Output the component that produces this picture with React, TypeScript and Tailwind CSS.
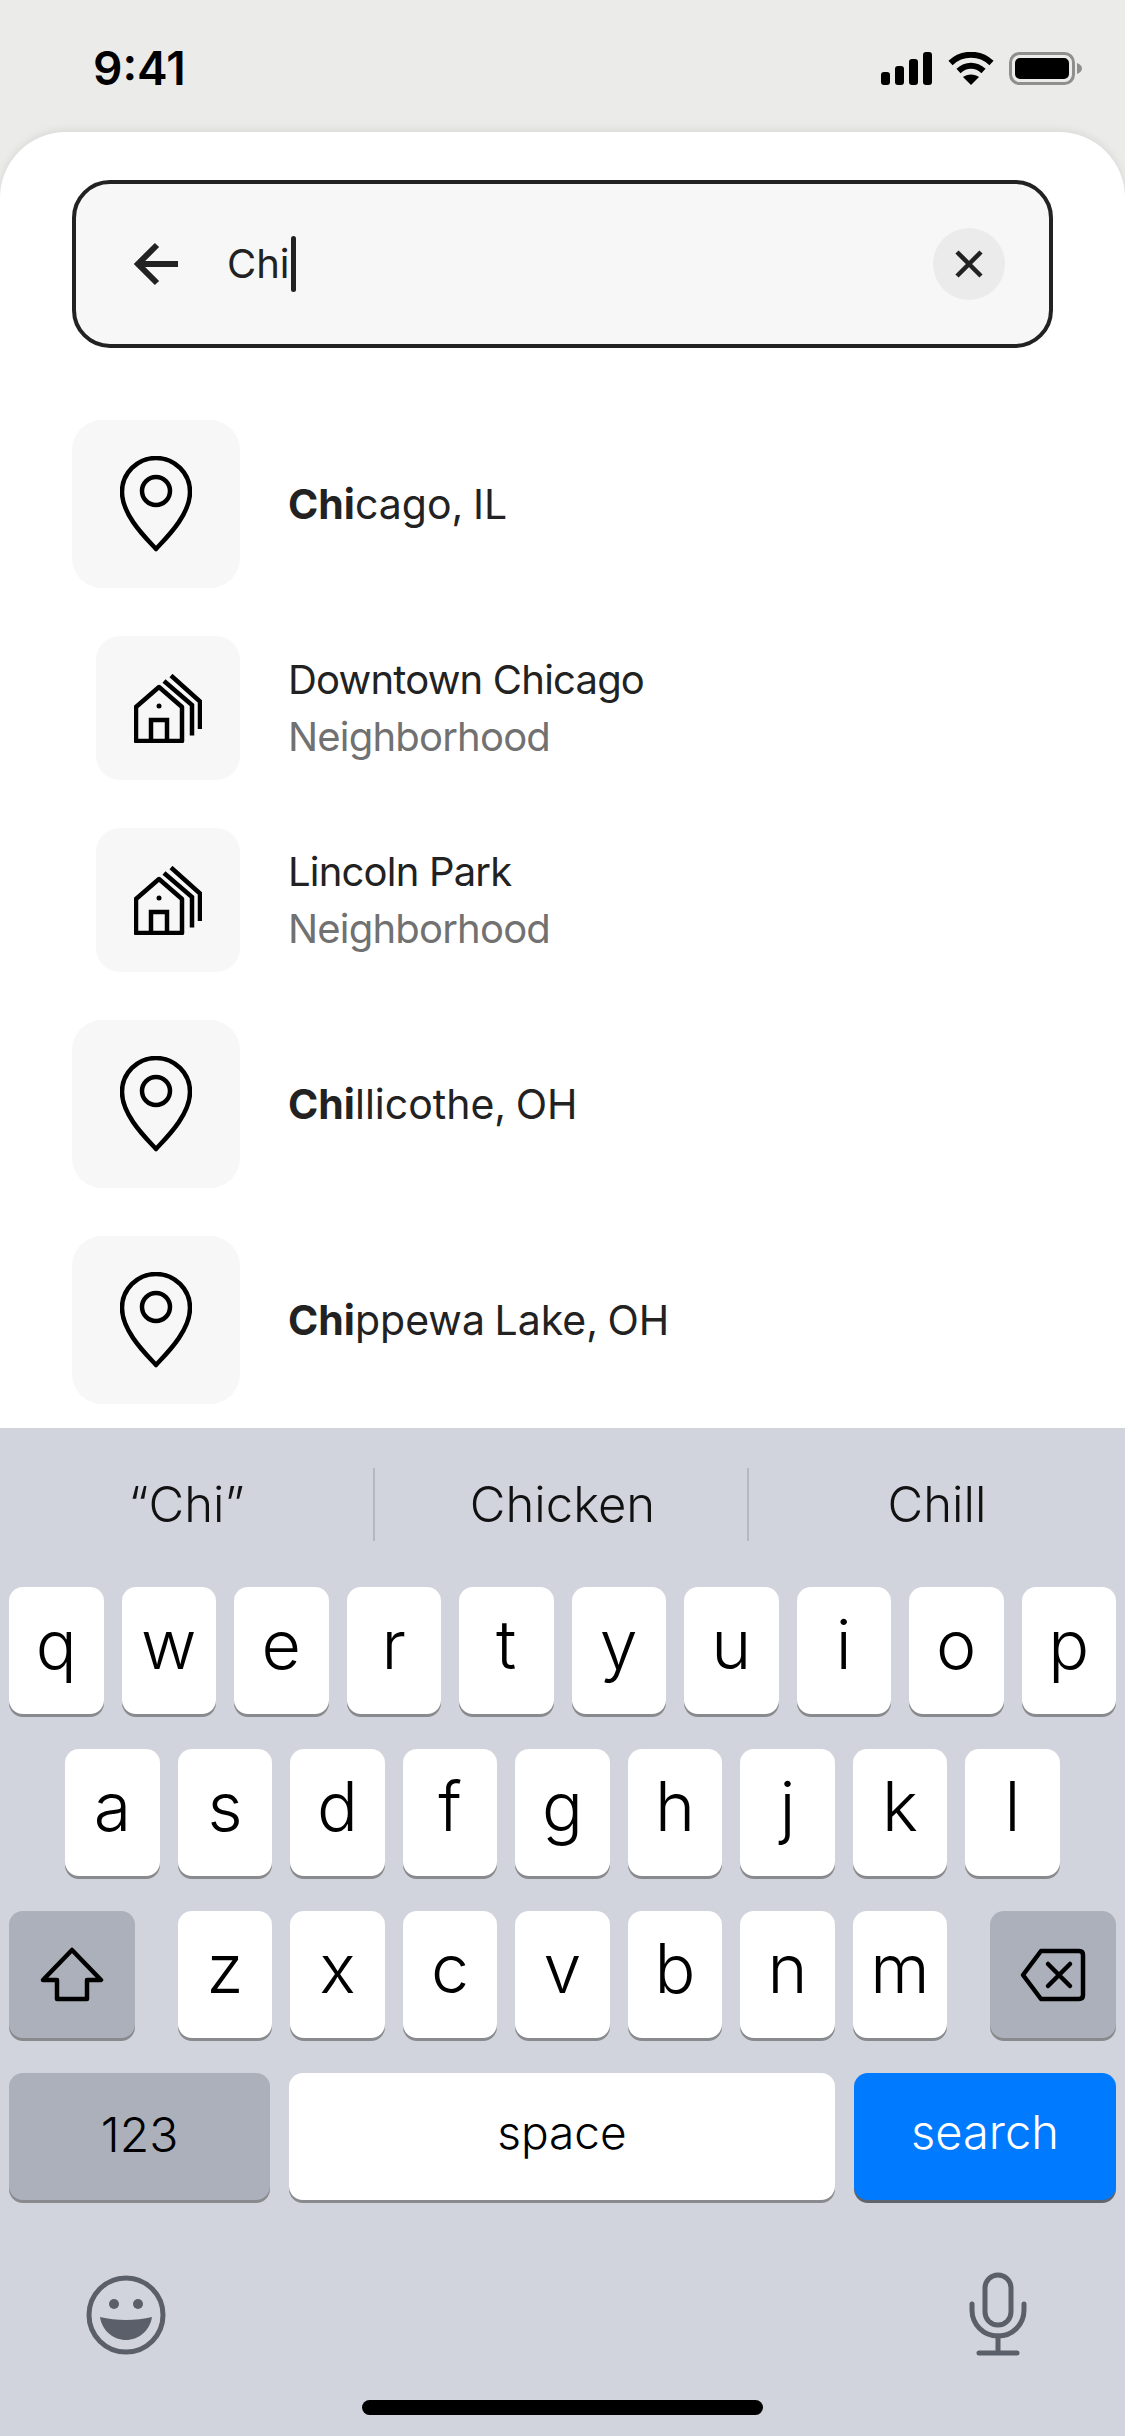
const sans = "font-['Inter','Liberation_Sans',sans-serif]";

function PinIcon() {
  return (
    <svg width="72" height="96" viewBox="0 0 72 96" fill="none" stroke="#000" strokeWidth="4.5">
      <path d="M36 93C28 84 2 60 2 36A34 34 0 0 1 70 36C70 60 44 84 36 93Z" strokeLinejoin="round" />
      <circle cx="36" cy="35" r="14" />
    </svg>
  );
}

function HouseIcon() {
  return (
    <svg width="68" height="69" viewBox="0 0 68 69" fill="none" stroke="#000" strokeWidth="4.5">
      <path d="M2 33L25 13L48 33V67H2Z" strokeLinejoin="round" />
      <path d="M17 67V46H33V67" />
      <circle cx="25" cy="32" r="2.5" fill="#000" stroke="none" />
      <path d="M30 7L58 31V61.5" />
      <path d="M37 1.5L66 27.5V55" />
    </svg>
  );
}

function Result({ kind, title, bold, sub }: { kind: "pin" | "house"; title: string; bold?: string; sub?: string }) {
  return (
    <div className="flex items-center gap-12">
      <div className="flex w-[168px] shrink-0 justify-end">
        <div
          className={
            kind === "pin"
              ? "flex h-[168px] w-[168px] items-center justify-center rounded-[30px] bg-[#f7f7f7]"
              : "flex h-[144px] w-[144px] items-center justify-center rounded-[24px] bg-[#f7f7f7]"
          }
        >
          {kind === "pin" ? <PinIcon /> : <HouseIcon />}
        </div>
      </div>
      <div
        className={
          kind === "pin"
            ? "text-[41px] leading-[57px] [word-spacing:-2px] text-[#222222]"
            : "text-[40px] leading-[57px] tracking-[-0.8px] text-[#222222]"
        }
      >
        <div>
          {bold && <span className="font-bold">{bold}</span>}
          {title}
        </div>
        {sub && <div className="text-[#717171]">{sub}</div>}
      </div>
    </div>
  );
}

function Key({ label }: { label: string }) {
  return (
    <div className="flex h-[127px] w-[94.5px] items-center justify-center rounded-[14px] bg-white pb-[13px] text-[68px] font-[350] text-black shadow-[0_3px_0_#898a8d]">
      {label}
    </div>
  );
}

function StatusIcons() {
  return (
    <div className="flex items-center gap-[15px]">
      <svg className="mr-[1px]" width="51" height="33" viewBox="0 0 51 33" fill="#000">
        <rect x="0" y="20" width="9" height="13" rx="3" />
        <rect x="14" y="14" width="9" height="19" rx="3" />
        <rect x="28" y="7" width="9" height="26" rx="3" />
        <rect x="42" y="0" width="9" height="33" rx="3" />
      </svg>
      <svg width="46" height="33" viewBox="0 0 46 33" fill="none" stroke="#000" strokeWidth="6">
        <path d="M2.5 11C14 0 32 0 43.5 11" />
        <path d="M10.5 19C18 12 28 12 35.5 19" />
        <path d="M23 33L15 25C19 21.5 27 21.5 31 25Z" fill="#000" stroke="none" />
      </svg>
      <svg width="73" height="33" viewBox="0 0 73 33">
        <rect x="1.5" y="1.5" width="63" height="30" rx="9" fill="none" stroke="#8f8f8f" strokeWidth="3" />
        <rect x="6" y="6" width="54" height="21" rx="5" fill="#000" />
        <path d="M68 11C71 12 73 14 73 16.5C73 19 71 21 68 22Z" fill="#8f8f8f" />
      </svg>
    </div>
  );
}

export default function App() {
  const row1 = ["q", "w", "e", "r", "t", "y", "u", "i", "o", "p"];
  const row2 = ["a", "s", "d", "f", "g", "h", "j", "k", "l"];
  const row3 = ["z", "x", "c", "v", "b", "n", "m"];

  return (
    <div className={`flex h-[2436px] w-[1125px] flex-col overflow-hidden bg-[#ebebe9] ${sans}`}>
      {/* Status bar */}
      <div className="flex h-[132px] shrink-0 items-start justify-between pl-[93px] pr-[43px] pt-[44px]">
        <span className="text-[46px] leading-[48px] font-semibold text-black">9:41</span>
        <div className="pt-[8px]">
          <StatusIcons />
        </div>
      </div>

      {/* Sheet */}
      <div className="h-[1296px] shrink-0 rounded-t-[66px] bg-white px-[72px] pt-12 shadow-[0_-2px_8px_rgba(0,0,0,0.08)]">
        <div className="flex h-[168px] items-center rounded-[38px] border-[4px] border-[#222222] bg-[#f7f7f7] pl-[57px] pr-[44px]">
          <svg width="46" height="44" viewBox="0 0 46 44" fill="none" stroke="#222222" strokeWidth="6">
            <path d="M5 22H45" />
            <path d="M24 3L5 22L24 41" />
          </svg>
          <div className="ml-[48px] flex flex-1 items-center text-[40px] text-[#222222]">
            Chi
            <span className="ml-[1px] h-[56px] w-[5px] rounded-full bg-[#222222]" />
          </div>
          <div className="flex h-[72px] w-[72px] items-center justify-center rounded-full bg-[#ebebeb]">
            <svg width="28" height="28" viewBox="0 0 28 28" fill="none" stroke="#222222" strokeWidth="4.5">
              <path d="M2 2L26 26M26 2L2 26" />
            </svg>
          </div>
        </div>

        <div className="mt-[72px] flex flex-col gap-12">
          <Result kind="pin" bold="Chi" title="cago, IL" />
          <Result kind="house" title="Downtown Chicago" sub="Neighborhood" />
          <Result kind="house" title="Lincoln Park" sub="Neighborhood" />
          <Result kind="pin" bold="Chi" title="llicothe, OH" />
          <Result kind="pin" bold="Chi" title="ppewa Lake, OH" />
        </div>
      </div>

      {/* Keyboard */}
      <div className="flex flex-1 flex-col bg-[#d1d4dc]">
        <div className="mt-[40px] flex h-[73px] items-center text-[49px] font-[350] text-[#111111]">
          <div className="flex h-full w-[375px] items-center justify-center border-r-2 border-[#b4b8c0]">“Chi”</div>
          <div className="flex h-full w-[374px] items-center justify-center border-r-2 border-[#b4b8c0] pl-[3px]">Chicken</div>
          <div className="flex h-full flex-1 items-center justify-center">Chill</div>
        </div>

        <div className="mt-[46px] flex flex-col gap-[35px] px-[9px]">
          <div className="flex justify-between">
            {row1.map((k) => (
              <Key key={k} label={k} />
            ))}
          </div>
          <div className="flex justify-center gap-[18px]">
            {row2.map((k) => (
              <Key key={k} label={k} />
            ))}
          </div>
          <div className="flex items-center justify-between">
            <div className="flex h-[127px] w-[126px] items-center justify-center rounded-[14px] bg-[#abb0ba] shadow-[0_3px_0_#898a8d]">
              <svg width="64" height="55" viewBox="0 0 64 55" fill="none" stroke="#000" strokeWidth="4.5" strokeLinejoin="round">
                <path d="M32 3L61 33H47V52H17V33H3Z" />
              </svg>
            </div>
            <div className="flex gap-[18px]">
              {row3.map((k) => (
                <Key key={k} label={k} />
              ))}
            </div>
            <div className="flex h-[127px] w-[126px] items-center justify-center rounded-[14px] bg-[#abb0ba] shadow-[0_3px_0_#898a8d]">
              <svg width="66" height="54" viewBox="0 0 66 54" fill="none" stroke="#000" strokeWidth="4.5" strokeLinejoin="round" strokeLinecap="round">
                <path d="M21 3H59Q63 3 63 7V47Q63 51 59 51H21L3 27Z" />
                <path d="M28 16L50 38M50 16L28 38" />
              </svg>
            </div>
          </div>
          <div className="flex justify-between">
            <div className="flex h-[127px] w-[261px] items-center justify-center rounded-[14px] bg-[#abb0ba] pb-[3px] text-[48px] font-[350] text-black shadow-[0_3px_0_#898a8d]">
              123
            </div>
            <div className="flex h-[127px] w-[546px] items-center justify-center rounded-[14px] bg-white pb-[8px] text-[46px] font-[350] text-black shadow-[0_3px_0_#898a8d]">
              space
            </div>
            <div className="flex h-[127px] w-[262px] items-center justify-center rounded-[14px] bg-[#007aff] pb-[8px] text-[47px] font-[350] text-white shadow-[0_3px_0_#60646c]">
              search
            </div>
          </div>
        </div>

        <div className="mt-[72px] flex h-[85px] items-center justify-between pl-[86px] pr-[98px]">
          <svg width="80" height="80" viewBox="0 0 80 80" fill="none">
            <circle cx="40" cy="40" r="37" stroke="#5a5f69" strokeWidth="5" />
            <circle cx="28" cy="29" r="5" fill="#5a5f69" />
            <circle cx="52" cy="29" r="5" fill="#5a5f69" />
            <path d="M14 42C30 46 50 46 66 42C64 56 52 65 40 65C28 65 16 56 14 42Z" fill="#5a5f69" />
          </svg>
          <svg width="58" height="85" viewBox="0 0 58 85" fill="none" stroke="#5a5f69" strokeWidth="5" strokeLinecap="round">
            <rect x="16" y="3" width="26" height="50" rx="13" />
            <path d="M3 32V38C3 52 14 64 29 64C44 64 55 52 55 38V32" />
            <path d="M29 64V81M10 81H48" />
          </svg>
        </div>

        <div className="mt-[43px] flex justify-center">
          <div className="h-[15px] w-[401px] rounded-full bg-black" />
        </div>
      </div>
    </div>
  );
}
